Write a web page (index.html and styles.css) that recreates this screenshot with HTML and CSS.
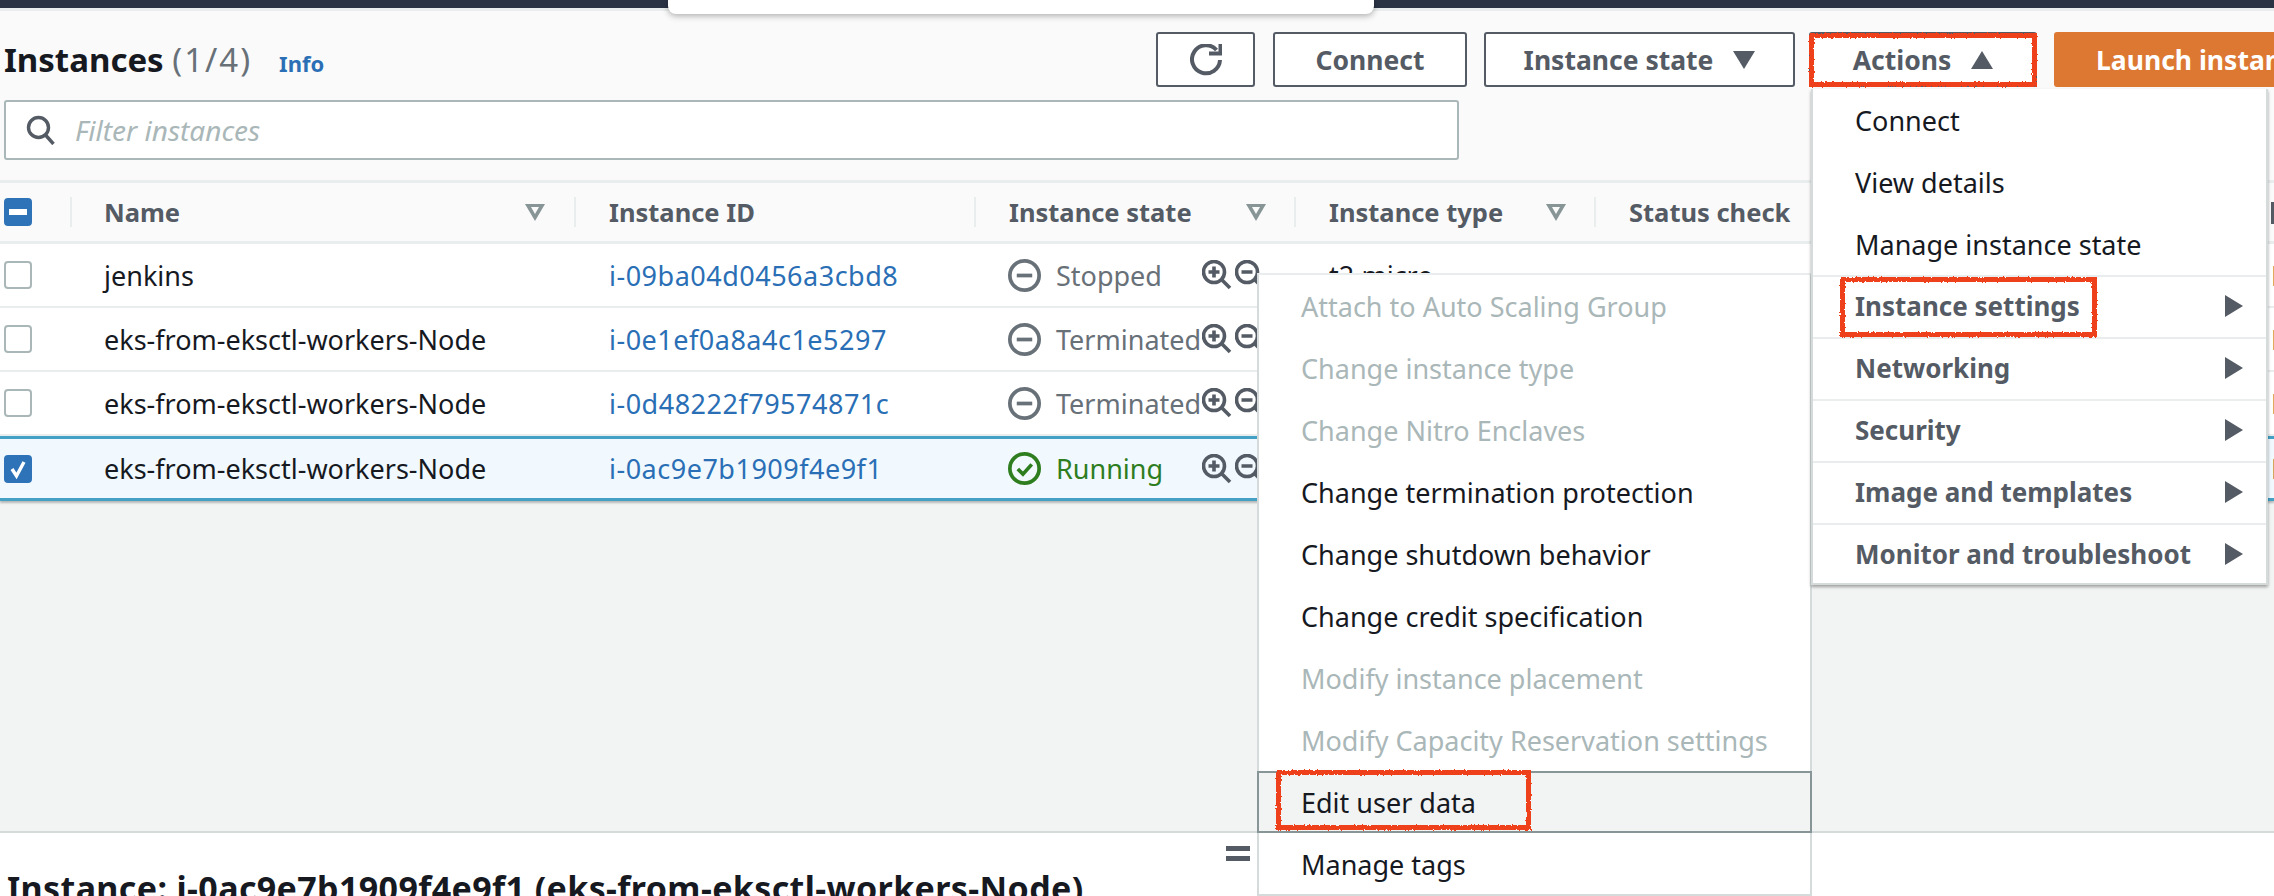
FILE: index.html
```html
<!DOCTYPE html>
<html lang="en">
<head>
  <meta charset="UTF-8" />
  <title>Instances</title>
  <link rel="stylesheet" href="styles.css">
</head>
<body>
  <div class="topbar"></div>
  <div class="popup"></div>

  <main class="list">
    <div class="head">
      <h1 class="title">Instances <span class="count">(1/4)</span></h1>
      <a class="info">Info</a>
      <div class="actions">
        <button class="btn btn-icon">
          <svg width="32" height="32" viewBox="0 0 32 32" fill="none" stroke="#545b64" stroke-width="4">
            <path d="M26.5 6A14 14 0 1 0 30 16"/>
            <path d="M19 9.5h11.5V0"/>
          </svg>
        </button>
        <button class="btn btn-connect">Connect</button>
        <button class="btn btn-state">Instance state <span class="tri-down"></span></button>
        <button class="btn btn-actions">Actions <span class="tri-up"></span></button>
        <button class="btn btn-launch">Launch instances</button>
      </div>
    </div>

    <div class="filter">
      <svg width="30" height="30" viewBox="0 0 30 30" fill="none" stroke="#545b64" stroke-width="3.4">
        <circle cx="12.5" cy="12.5" r="10"/>
        <path d="M19.5 20l8 9"/>
      </svg>
      <span>Filter instances</span>
    </div>

    <div class="row row-head">
      <div class="cell c-check"><span class="box box-mixed"></span></div>
      <div class="cell c-name">Name <span class="sort"></span></div>
      <div class="cell c-id">Instance ID</div>
      <div class="cell c-state">Instance state <span class="sort"></span></div>
      <div class="cell c-type">Instance type <span class="sort"></span></div>
      <div class="cell c-status">Status check</div>
      <div class="cell c-edge"></div>
    </div>

    <div class="row">
      <div class="cell c-check"><span class="box"></span></div>
      <div class="cell c-name">jenkins</div>
      <div class="cell c-id"><a>i-09ba04d0456a3cbd8</a></div>
      <div class="cell c-state">
        <svg class="state-icon" viewBox="0 0 32 32"><circle cx="16" cy="16" r="14.2"/><path d="M8.5 16h15"/></svg>
        <span class="state-text">Stopped</span>
        <span class="zooms"><svg class="zoom-icon" viewBox="0 0 30 30"><circle cx="12" cy="12" r="10.5"/><path d="M20 20l8 8M12 6.5v11M6.5 12h11"/></svg><svg class="zoom-icon" viewBox="0 0 30 30"><circle cx="12" cy="12" r="10.5"/><path d="M20 20l8 8M6.5 12h11"/></svg></span>
      </div>
      <div class="cell c-type">t2.micro</div>
      <div class="cell c-status"></div>
      <div class="cell c-edge">No alarms</div>
    </div>

    <div class="row">
      <div class="cell c-check"><span class="box"></span></div>
      <div class="cell c-name">eks-from-eksctl-workers-Node</div>
      <div class="cell c-id"><a>i-0e1ef0a8a4c1e5297</a></div>
      <div class="cell c-state">
        <svg class="state-icon" viewBox="0 0 32 32"><circle cx="16" cy="16" r="14.2"/><path d="M8.5 16h15"/></svg>
        <span class="state-text">Terminated</span>
        <span class="zooms"><svg class="zoom-icon" viewBox="0 0 30 30"><circle cx="12" cy="12" r="10.5"/><path d="M20 20l8 8M12 6.5v11M6.5 12h11"/></svg><svg class="zoom-icon" viewBox="0 0 30 30"><circle cx="12" cy="12" r="10.5"/><path d="M20 20l8 8M6.5 12h11"/></svg></span>
      </div>
      <div class="cell c-type"></div>
      <div class="cell c-status"></div>
      <div class="cell c-edge">No alarms</div>
    </div>

    <div class="row">
      <div class="cell c-check"><span class="box"></span></div>
      <div class="cell c-name">eks-from-eksctl-workers-Node</div>
      <div class="cell c-id"><a>i-0d48222f79574871c</a></div>
      <div class="cell c-state">
        <svg class="state-icon" viewBox="0 0 32 32"><circle cx="16" cy="16" r="14.2"/><path d="M8.5 16h15"/></svg>
        <span class="state-text">Terminated</span>
        <span class="zooms"><svg class="zoom-icon" viewBox="0 0 30 30"><circle cx="12" cy="12" r="10.5"/><path d="M20 20l8 8M12 6.5v11M6.5 12h11"/></svg><svg class="zoom-icon" viewBox="0 0 30 30"><circle cx="12" cy="12" r="10.5"/><path d="M20 20l8 8M6.5 12h11"/></svg></span>
      </div>
      <div class="cell c-type"></div>
      <div class="cell c-status"></div>
      <div class="cell c-edge">No alarms</div>
    </div>

    <div class="row row-selected">
      <div class="cell c-check">
        <span class="box box-checked">
          <svg width="28" height="28" viewBox="0 0 28 28" fill="none" stroke="#fff" stroke-width="3.4"><path d="M8 14l4.500 7 7.500-14"/></svg>
        </span>
      </div>
      <div class="cell c-name">eks-from-eksctl-workers-Node</div>
      <div class="cell c-id"><a>i-0ac9e7b1909f4e9f1</a></div>
      <div class="cell c-state">
        <svg class="state-icon state-ok" viewBox="0 0 32 32"><circle cx="16" cy="16" r="14.2"/><path d="M9.5 16.500l5 5 8.500-9.500"/></svg>
        <span class="state-text state-run">Running</span>
        <span class="zooms"><svg class="zoom-icon" viewBox="0 0 30 30"><circle cx="12" cy="12" r="10.5"/><path d="M20 20l8 8M12 6.5v11M6.5 12h11"/></svg><svg class="zoom-icon" viewBox="0 0 30 30"><circle cx="12" cy="12" r="10.5"/><path d="M20 20l8 8M6.5 12h11"/></svg></span>
      </div>
      <div class="cell c-type"></div>
      <div class="cell c-status"></div>
      <div class="cell c-edge">No alarms</div>
    </div>
    <div class="empty"></div>
  </main>

  <section class="detail">
    <div class="grip"><i></i><i></i></div>
    <h2 class="detail-title">Instance: i-0ac9e7b1909f4e9f1 (eks-from-eksctl-workers-Node)</h2>
  </section>

  <ul class="menu menu-actions">
    <li>Connect</li>
    <li>View details</li>
    <li>Manage instance state</li>
    <li class="sub">Instance settings <span class="tri-right"></span></li>
    <li class="sub">Networking <span class="tri-right"></span></li>
    <li class="sub">Security <span class="tri-right"></span></li>
    <li class="sub">Image and templates <span class="tri-right"></span></li>
    <li class="sub">Monitor and troubleshoot <span class="tri-right"></span></li>
  </ul>

  <ul class="menu menu-settings">
    <li class="off">Attach to Auto Scaling Group</li>
    <li class="off">Change instance type</li>
    <li class="off">Change Nitro Enclaves</li>
    <li>Change termination protection</li>
    <li>Change shutdown behavior</li>
    <li>Change credit specification</li>
    <li class="off">Modify instance placement</li>
    <li class="off">Modify Capacity Reservation settings</li>
    <li class="hover">Edit user data</li>
    <li>Manage tags</li>
  </ul>

  <!-- red boxes drawn on the screenshot -->
  <svg class="filters" width="0" height="0">
    <filter id="rough">
      <feTurbulence type="fractalNoise" baseFrequency="0.6" numOctaves="2" seed="4"/>
      <feDisplacementMap in="SourceGraphic" scale="3"/>
    </filter>
  </svg>
  <div class="mark mark-actions"></div>
  <div class="mark mark-settings"></div>
  <div class="mark mark-edit"></div>
</body>
</html>
```

FILE: styles.css
```css
* {
  box-sizing: border-box;
}

html, body {
  height: 100%;
}

body {
  margin: 0;
  background: #fafafa;
  color: #16191f;
  font-family: "Noto Sans", "Open Sans", sans-serif;
  font-size: 27px;
  display: flex;
  flex-direction: column;
  overflow: hidden;
  position: relative;
}

.topbar {
  height: 11px;
  background: #2a3344;
  border-bottom: 3px solid #eaeded;
  flex: none;
}

.popup {
  position: absolute;
  left: 668px;
  top: 0;
  width: 706px;
  height: 14px;
  background: #fff;
  border-radius: 0 0 8px 8px;
  box-shadow: 0 2px 6px rgba(0, 0, 0, 0.3);
}

.list {
  flex: none;
  height: 822px;
  display: flex;
  flex-direction: column;
}

.head {
  display: flex;
  align-items: center;
  height: 55px;
  margin-top: 21px;
  padding-left: 4px;
  flex: none;
}

.title {
  margin: 0;
  font-size: 33px;
  font-weight: 700;
  line-height: 40px;
}

.count {
  font-weight: 400;
  color: #687078;
  letter-spacing: 2px;
}

.info {
  margin-left: 27px;
  margin-top: 6px;
  font-size: 22px;
  font-weight: 700;
  color: #2a6fb5;
}

.actions {
  position: absolute;
  left: 1156px;
  top: 32px;
  display: flex;
  gap: 17px;
}

.btn {
  height: 55px;
  background: #fff;
  border: 2px solid #545b64;
  border-radius: 3px;
  color: #545b64;
  font: 700 26.5px "Noto Sans", "Open Sans", sans-serif;
  display: flex;
  align-items: center;
  justify-content: center;
  white-space: nowrap;
  padding: 0;
}

.btn-icon { width: 99px; }
.btn-connect { width: 194px; margin-left: 1px; }
.btn-state { width: 311px; }
.btn-actions { width: 228px; margin-left: -3px; }

.btn-launch {
  width: 300px;
  background: #dd7832;
  border-color: #dd7832;
  color: #fff;
  justify-content: flex-start;
  padding-left: 40px;
}

.tri-down, .tri-up {
  width: 0;
  height: 0;
  margin-left: 20px;
  border-left: 11px solid transparent;
  border-right: 11px solid transparent;
}

.tri-down { border-top: 18px solid #545b64; }
.tri-up { border-bottom: 18px solid #545b64; }

.filter {
  width: 1455px;
  height: 60px;
  margin: 13px 0 0 4px;
  background: #fff;
  border: 2px solid #aab7b8;
  border-radius: 3px;
  display: flex;
  align-items: center;
  gap: 19px;
  padding-left: 20px;
  color: #aab7b8;
  font-size: 28px;
  font-style: italic;
  flex: none;
}

.row {
  display: flex;
  align-items: center;
  height: 64px;
  background: #fff;
  border-bottom: 2px solid #eaeded;
  flex: none;
}

.row-head {
  margin-top: 20px;
  height: 64px;
  background: #fafafa;
  border-top: 3px solid #eaeded;
  border-bottom: 3px solid #eaeded;
  color: #545b64;
  font-size: 25.5px;
  font-weight: 700;
}

.row-selected {
  height: 65px;
  background: #f1f9fe;
  border-top: 3px solid #44a1c5;
  border-bottom: 3px solid #44a1c5;
  box-shadow: 0 2px 2px rgba(0, 0, 0, 0.25);
  position: relative;
}

.empty {
  flex: 1;
  background: #f2f3f3;
  border-bottom: 2px solid #d5dbdb;
}

.cell {
  display: flex;
  align-items: center;
  white-space: nowrap;
  height: 30px;
  flex: none;
}

.row-head .cell {
  border-right: 2px solid #eaeded;
}

.row-head .c-status { border-right: 0; }

.c-check { width: 72px; padding-left: 4px; }
.c-name { width: 504px; padding-left: 32px; justify-content: space-between; padding-right: 29px; }
.c-id { width: 400px; padding-left: 33px; letter-spacing: 0.5px; }
.c-state { width: 320px; padding-left: 32px; justify-content: flex-start; }
.c-type { width: 300px; padding-left: 33px; }
.c-status { width: 675px; padding-left: 33px; }
.row-head .c-id { letter-spacing: 0; }
.row-head .c-state { padding-left: 33px; }
.row-head .c-state, .row-head .c-type { justify-content: space-between; padding-right: 28px; }

.c-edge { width: 3px; overflow: hidden; }
.row-head .c-edge {
  border: 0;
  border-left: 3px solid #545b64;
  height: 22px;
  margin-top: 2px;
}

.box {
  width: 28px;
  height: 28px;
  border: 2px solid #aab7b8;
  border-radius: 4px;
  background: #fff;
  display: block;
  position: relative;
}

.box-mixed, .box-checked {
  background: #2e73b8;
  border-color: #2e73b8;
}

.box-mixed::after {
  content: "";
  position: absolute;
  left: 3px;
  right: 3px;
  top: 9px;
  height: 6px;
  background: #fff;
}

.box-checked svg {
  display: block;
  margin: -2px;
}

.sort {
  width: 0;
  height: 0;
  border-left: 10px solid transparent;
  border-right: 10px solid transparent;
  border-top: 17px solid #879596;
  position: relative;
}

.sort::after {
  content: "";
  position: absolute;
  left: -4px;
  top: -13.500px;
  border-left: 4px solid transparent;
  border-right: 4px solid transparent;
  border-top: 7px solid #fafafa;
}

a {
  color: #2a6fb5;
}

.state-icon {
  width: 33px;
  height: 33px;
  fill: none;
  stroke: #687078;
  stroke-width: 3.6;
  flex: none;
}

.state-ok { stroke: #2e7d1e; }

.state-text {
  margin-left: 15px;
  color: #687078;
}

.state-run { color: #2e7d1e; }

.zooms {
  position: absolute;
  left: 1202px;
  display: flex;
  gap: 3px;
}

.zoom-icon {
  width: 30px;
  height: 30px;
  fill: none;
  stroke: #545b64;
  stroke-width: 3.6;
}

.detail {
  flex: 1;
  background: #fff;
  position: relative;
  padding: 35px 0 0 7px;
}

.grip {
  position: absolute;
  left: 1226px;
  top: 13px;
}

.grip i {
  display: block;
  width: 24px;
  height: 5px;
  margin-bottom: 5px;
  background: #545b64;
}

.detail-title {
  margin: 0;
  font-size: 34px;
  font-weight: 700;
  line-height: 40px;
  letter-spacing: 0.37px;
  white-space: nowrap;
}

.menu {
  position: absolute;
  margin: 0;
  padding: 0;
  list-style: none;
  background: #fff;
  border: 2px solid #d5dbdb;
  border-top: 0;
}

.menu li {
  height: 62px;
  display: flex;
  align-items: center;
  white-space: nowrap;
}

.menu-actions {
  left: 1811px;
  top: 89px;
  width: 457px;
  height: 496px;
  box-shadow: 0 2px 3px rgba(0, 0, 0, 0.35);
  z-index: 2;
}

.menu-actions li {
  padding-left: 42px;
}

.menu-actions .sub {
  color: #545b64;
  font-size: 26px;
  font-weight: 700;
  justify-content: space-between;
  padding-right: 23px;
  padding-bottom: 2px;
  border-top: 2px solid #eaeded;
}

.tri-right {
  width: 0;
  height: 0;
  border-top: 11px solid transparent;
  border-bottom: 11px solid transparent;
  border-left: 18px solid #545b64;
}

.menu-settings {
  left: 1257px;
  top: 273px;
  width: 555px;
  height: 623px;
  border-top: 2px solid #eaeded;
  z-index: 1;
}

.menu-settings li {
  padding-left: 42px;
}

.menu-settings .off {
  color: #aab7b8;
}

.menu-settings .hover {
  background: #f2f3f3;
  border: 2px solid #879596;
  margin: 0 -2px;
}

.filters {
  position: absolute;
}

.mark {
  position: absolute;
  border: 5px solid #ef3f1f;
  filter: url(#rough);
  z-index: 3;
}

.mark-actions { left: 1809px; top: 33px; width: 228px; height: 54px; }
.mark-settings { left: 1840px; top: 277px; width: 257px; height: 60px; }
.mark-edit { left: 1276px; top: 770px; width: 255px; height: 60px; }
```
